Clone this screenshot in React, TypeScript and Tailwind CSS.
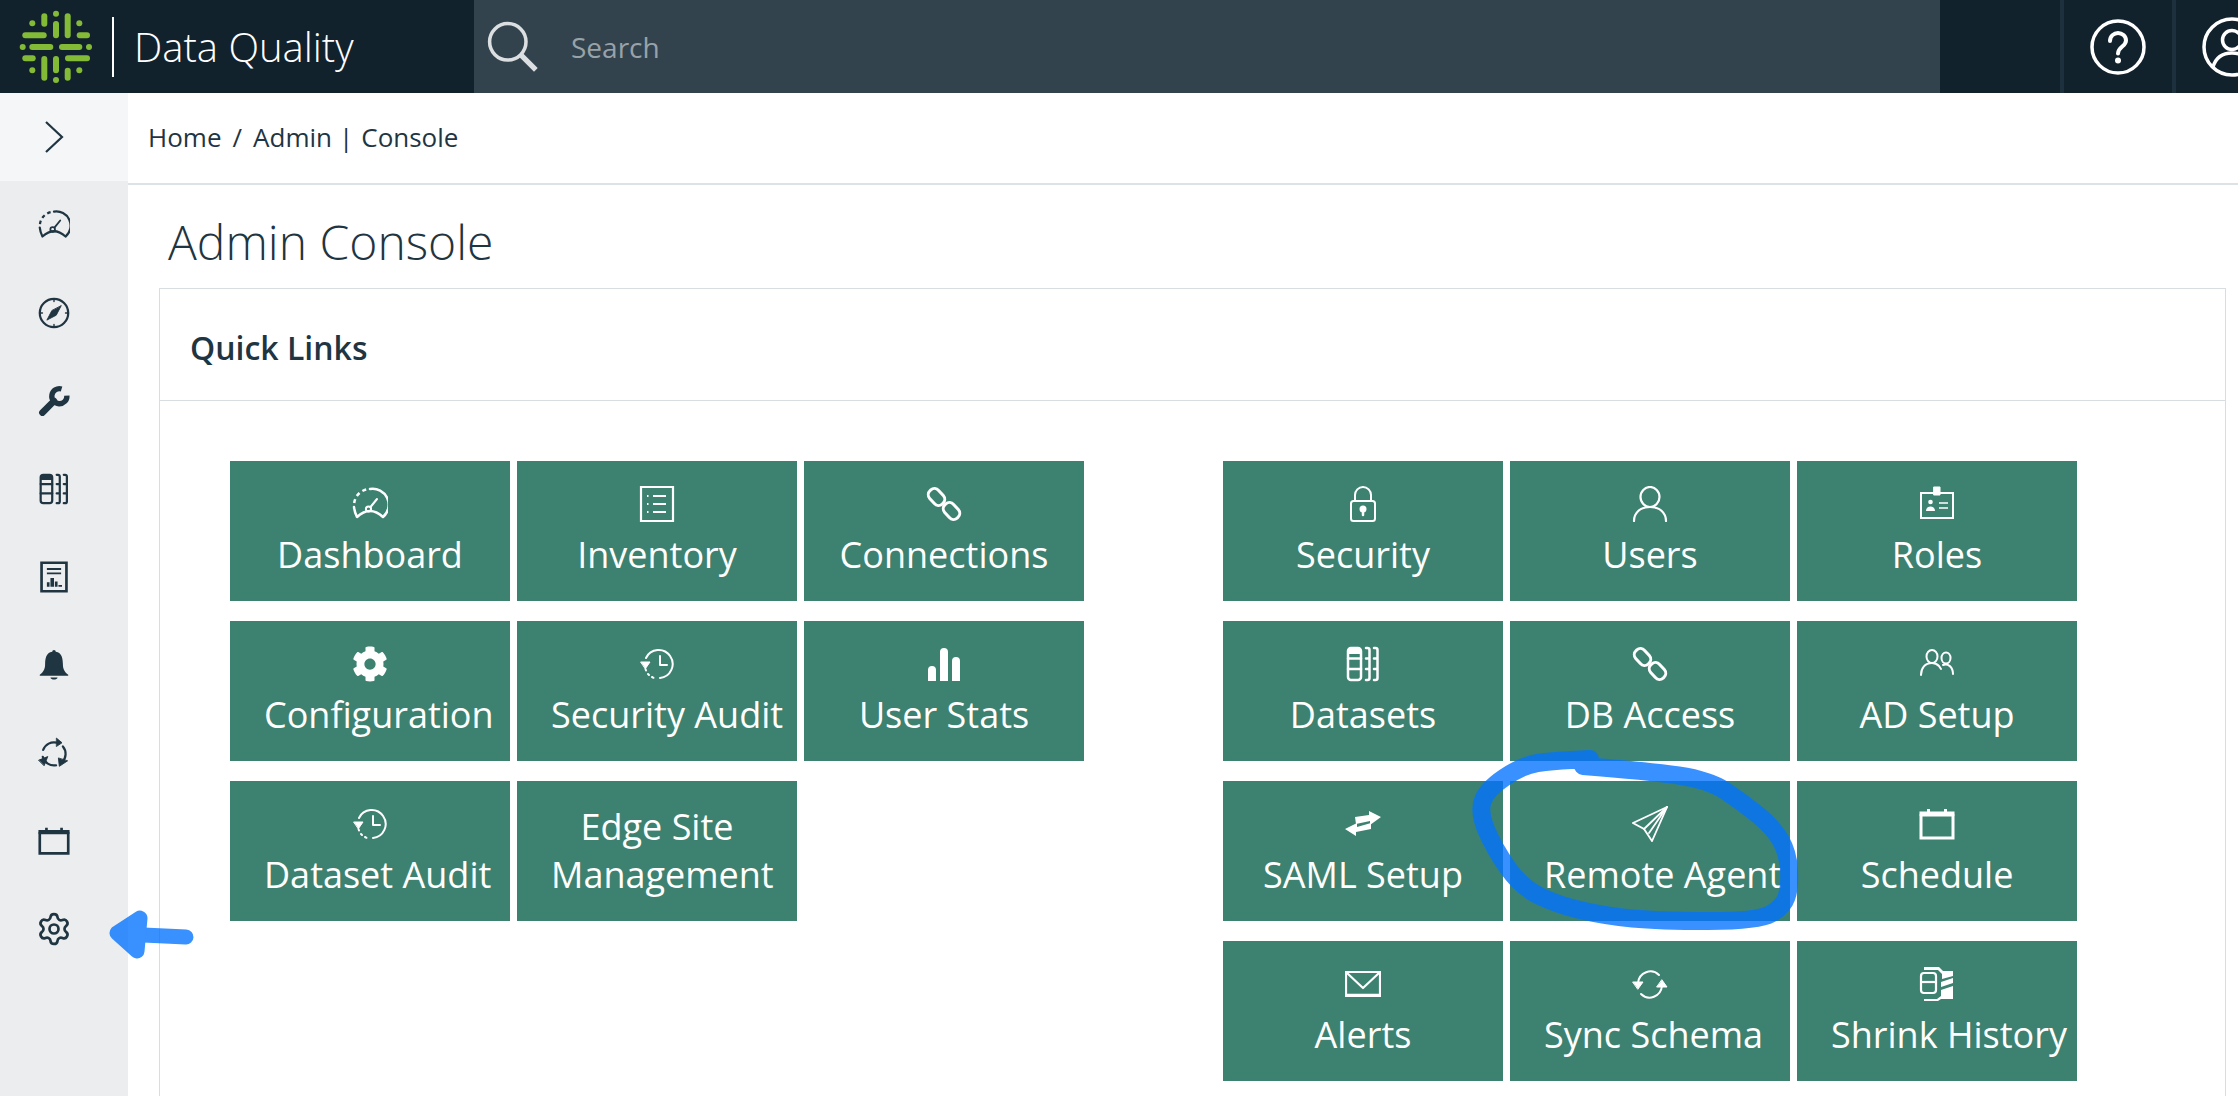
import React from 'react';
import { Settings } from 'lucide-react';
import { FaCog } from 'react-icons/fa';

type IconProps = { className?: string };

function Svg({ className, sw = 2.5, children }: IconProps & { sw?: number; children: React.ReactNode }) {
  return (
    <svg viewBox="0 0 36 36" className={className} fill="none" stroke="currentColor" strokeWidth={sw} strokeLinecap="round" strokeLinejoin="round">
      {children}
    </svg>
  );
}

const Gauge = ({ className }: IconProps) => (
  <Svg className={className}>
    <path d="M2.200 17 A16 16 0 0 1 16 3.200" strokeDasharray="4 3.500" strokeLinecap="butt" />
    <path d="M18 3 A16 16 0 0 1 31 31 Q18 19 5 31 Q2.500 26 2 21" />
    <circle cx="16.500" cy="23" r="2.600" strokeWidth="2" />
    <path d="M18.500 21 L25 13" strokeWidth="2" />
  </Svg>
);

const CompassIcon = ({ className }: IconProps) => (
  <Svg className={className}>
    <circle cx="18" cy="18" r="16" />
    <path d="M18 2v3M18 31v3M2 18h3M31 18h3" strokeWidth="1.600" />
    <path d="M26 10 L20.500 20.500 L10 26 L15.500 15.500Z" fill="currentColor" strokeWidth="1" />
  </Svg>
);

const WrenchIcon = ({ className }: IconProps) => (
  <Svg className={className} sw={6}>
    <path d="M5 31 L18 18" strokeWidth="7.500" />
    <path d="M26.500 4.500 A8.500 8.500 0 1 0 32.500 12" strokeWidth="6" strokeLinecap="butt" />
  </Svg>
);

const Datasets = ({ className }: IconProps) => (
  <Svg className={className}>
    <rect x="3" y="2" width="13" height="32" rx="3" />
    <path d="M3 12.500h13M3 23h13" />
    <path d="M3 8V5q0-3 3-3h7q3 0 3 3v3z" fill="currentColor" stroke="none" />
    <path d="M21 2h1.500q2 0 2 2v28q0 2-2 2H21M21 12.500h3.500M21 23h3.500" />
    <path d="M29 2h1.500q2 0 2 2v28q0 2-2 2H29M29 12.500h3.500M29 23h3.500" />
  </Svg>
);

const Report = ({ className }: IconProps) => (
  <Svg className={className} sw={3}>
    <path d="M4 2h28v32H4z" strokeLinejoin="miter" />
    <path d="M10 9h16M10 14h16" strokeWidth="2" strokeLinecap="butt" />
    <path d="M10 24h3v5h-3zM14 19h4v10h-4zM19 23h3v6h-3zM23 27h4v2h-4z" fill="currentColor" stroke="none" />
  </Svg>
);

const Bell = ({ className }: IconProps) => (
  <svg viewBox="0 0 36 36" className={className} fill="currentColor">
    <path d="M18 1a2 2 0 0 1 2 2C27 4 28 11 28 17c0 6 2 9 6 12v1H2v-1c4-3 6-6 6-12C8 11 9 4 16 3a2 2 0 0 1 2-2Z" />
    <path d="M14 32h8c-.5 3-7.500 3-8 0Z" />
  </svg>
);

const Cycle = ({ className }: IconProps) => (
  <Svg className={className}>
    <path d="M5.800 14.600 A13 13 0 0 1 21.400 6.400" />
    <path d="M28 10.600 A13 13 0 0 1 27.200 28.200" />
    <path d="M20.300 31.800 A13 13 0 0 1 5.400 22.400" />
    <path d="M21 1.500 L27 6.500 L21 10.500Z" fill="currentColor" strokeWidth="1" />
    <path d="M33 27 L24 33 L23 24Z" fill="currentColor" strokeWidth="1" />
    <path d="M1 26 L11 22 L7 32Z" fill="currentColor" strokeWidth="1" />
  </Svg>
);

const Calendar = ({ className }: IconProps) => (
  <Svg className={className} sw={3}>
    <path d="M2 7h32v25H2z" strokeLinejoin="miter" />
    <path d="M2 9h32" strokeWidth="3" />
    <path d="M9.500 3v4M26.500 3v4" strokeLinecap="butt" />
  </Svg>
);

const ListIcon = ({ className }: IconProps) => (
  <Svg className={className} sw={2.200}>
    <path d="M2 1h32v34H2z" strokeLinejoin="miter" />
    <path d="M14 10h13M14 18h13M14 26h13" strokeLinecap="butt" />
    <path d="M8 10h1.500M8 18h1.500M8 26h1.500" strokeLinecap="butt" />
  </Svg>
);

const LinkIcon = ({ className }: IconProps) => (
  <Svg className={className} sw={3}>
    <rect x="1.500" y="5" width="18" height="12" rx="5.500" transform="rotate(48 10.500 11)" />
    <rect x="16.500" y="19" width="18" height="12" rx="5.500" transform="rotate(48 25.500 25)" />
  </Svg>
);

const History = ({ className }: IconProps) => (
  <Svg className={className} sw={2}>
    <path d="M7 12 A14 14 0 1 1 21 32" />
    <path d="M9 28 L10 29M13 31 L14.500 31.800M6.500 23 L7 24.500" />
    <path d="M21 10v9h7" />
    <path d="M2 16h9l-4.500 6.500Z" fill="currentColor" strokeWidth="1" />
  </Svg>
);

const Bars = ({ className }: IconProps) => (
  <svg viewBox="0 0 36 36" className={className} fill="currentColor">
    <path d="M2 35V24q0-4 4-4t4 4v11zM14 35V6q0-4 4-4t4 4v29zM26 35V15q0-4 4-4t4 4v20z" />
  </svg>
);

const Lock = ({ className }: IconProps) => (
  <Svg className={className} sw={2}>
    <rect x="6" y="15" width="24" height="20" rx="2.500" />
    <path d="M10 15V9a8 8 0 0 1 16 0v6" />
    <circle cx="18" cy="23" r="2.500" fill="currentColor" />
    <path d="M18 24v5" strokeWidth="2.500" />
  </Svg>
);

const UserIcon = ({ className }: IconProps) => (
  <Svg className={className} sw={2.200}>
    <ellipse cx="18" cy="11" rx="9.500" ry="10" />
    <path d="M2 35C2 27 8 21 18 21s16 6 16 14" />
  </Svg>
);

const Badge = ({ className }: IconProps) => (
  <Svg className={className} sw={2}>
    <path d="M2 7h32v25H2z" strokeLinejoin="miter" />
    <rect x="15" y="1" width="6" height="8" fill="currentColor" strokeWidth="1" />
    <circle cx="11.500" cy="16" r="2.300" fill="currentColor" stroke="none" />
    <path d="M7 25c0-6 9-6 9 0z" fill="currentColor" stroke="none" />
    <path d="M20 17h9M20 22h9" strokeWidth="1.500" strokeLinecap="butt" />
  </Svg>
);

const Pair = ({ className }: IconProps) => (
  <Svg className={className} sw={2}>
    <ellipse cx="13" cy="10.500" rx="5.500" ry="6.500" />
    <path d="M2 29c0-7 4-12 11-12 3 0 5 1 7 3l2 3" />
    <ellipse cx="27" cy="12" rx="4.500" ry="5.500" />
    <path d="M24 19c5-2 10 2 10 9" />
  </Svg>
);

const Swap = ({ className }: IconProps) => (
  <svg viewBox="0 0 36 36" className={className} fill="currentColor">
    <path d="M10 11 L24 9 V5 L36 11 L25 19 V15 L11 18Z" />
    <path d="M26 17 L12 21 V17 L0 23 L11 30 V26 L26 23Z" />
  </svg>
);

const Plane = ({ className }: IconProps) => (
  <Svg className={className} sw={1.800}>
    <path d="M35 1 L1 17 L12 23 L20 35Z" strokeLinejoin="miter" />
    <path d="M35 1 L12 23M35 1 L17 27" />
  </Svg>
);

const MailIcon = ({ className }: IconProps) => (
  <Svg className={className} sw={2.200}>
    <path d="M1 6h34v24H1z" strokeLinejoin="miter" />
    <path d="M2 7 L18 22 L34 7" />
    <path d="M1 29h34" strokeWidth="2.500" />
  </Svg>
);

const SyncIcon = ({ className }: IconProps) => (
  <Svg className={className} sw={2}>
    <path d="M6 17 A12.500 13 0 0 1 27 9" />
    <path d="M30 20 A12.500 13 0 0 1 9 28" />
    <path d="M1 16h10l-5 7Z" fill="currentColor" strokeWidth="1" />
    <path d="M25 21h10l-5-7Z" fill="currentColor" strokeWidth="1" />
  </Svg>
);

const Shrink = ({ className }: IconProps) => (
  <svg viewBox="0 0 36 36" className={className}>
    <rect x="2" y="7" width="15" height="20" rx="3" fill="none" stroke="currentColor" strokeWidth="2.200" />
    <path d="M2 16h15" stroke="currentColor" strokeWidth="2.200" />
    <path d="M5 1h15l4 4h10v5l-11 3V8l-4-4H5zM22 16l12-4v5l-12 4zM22 24l12-4v13H22l-3 2H5v-2h13l4-3z" fill="currentColor" />
  </svg>
);

const Magnifier = ({ className }: IconProps) => (
  <svg viewBox="0 0 50 50" className={className} fill="none" stroke="currentColor">
    <circle cx="20" cy="20" r="17.500" strokeWidth="3.400" />
    <path d="M33 33 L47 47" strokeWidth="5" />
  </svg>
);

function Logo() {
  const lines = [
    'M44.300 16.300V23.700', 'M56 24V35.300', 'M67.700 16.300V35.300',
    'M44.300 59V77.700', 'M56 59V70.300', 'M67.700 70.700V77.700',
    'M25.300 35.300H43.700', 'M79.700 35.300H87', 'M32.300 47H50.300', 'M62 47H79.300',
    'M25.300 58.300H32.700', 'M68 58.300H87',
  ];
  const dots = [[56, 13.700], [32.300, 23.300], [79.300, 23.300], [22.700, 47], [89, 47], [32.300, 70.300], [79.300, 70.300], [56, 80]];
  return (
    <svg viewBox="18 9 76 76" className="h-[76px] w-[76px] shrink-0 text-[#84bb36]" fill="currentColor" stroke="currentColor" strokeLinecap="round">
      {lines.map((d) => <path key={d} d={d} strokeWidth="6" fill="none" />)}
      {dots.map(([cx, cy]) => <circle key={`${cx}-${cy}`} cx={cx} cy={cy} r="3" strokeWidth="0" />)}
    </svg>
  );
}

const sideIcons = [Gauge, CompassIcon, WrenchIcon, Datasets, Report, Bell, Cycle, Calendar];

type Tile = { label: React.ReactNode; icon?: React.ComponentType<IconProps> };

const leftTiles: Tile[] = [
  { label: 'Dashboard', icon: Gauge },
  { label: 'Inventory', icon: ListIcon },
  { label: 'Connections', icon: LinkIcon },
  { label: 'Configuration', icon: FaCog },
  { label: 'Security Audit', icon: History },
  { label: 'User Stats', icon: Bars },
  { label: 'Dataset Audit', icon: History },
  { label: <>Edge Site<br />Management</> },
];

const rightTiles: Tile[] = [
  { label: 'Security', icon: Lock },
  { label: 'Users', icon: UserIcon },
  { label: 'Roles', icon: Badge },
  { label: 'Datasets', icon: Datasets },
  { label: 'DB Access', icon: LinkIcon },
  { label: 'AD Setup', icon: Pair },
  { label: 'SAML Setup', icon: Swap },
  { label: 'Remote Agent', icon: Plane },
  { label: 'Schedule', icon: Calendar },
  { label: 'Alerts', icon: MailIcon },
  { label: 'Sync Schema', icon: SyncIcon },
  { label: 'Shrink History', icon: Shrink },
];

function TileButton({ tile }: { tile: Tile }) {
  const Icon = tile.icon;
  return (
    <a href="#" className={Icon
      ? 'block h-[140px] bg-[#3d8270] px-[34px] pt-[25px] text-center whitespace-nowrap text-[36px] leading-[48px] text-white'
      : 'flex h-[140px] flex-col justify-center bg-[#3d8270] px-[34px] text-center whitespace-nowrap text-[36px] leading-[48px] text-white'}>
      {Icon && <Icon className="mx-auto mb-[9px] block h-9 w-9" />}
      <span className="block">{tile.label}</span>
    </a>
  );
}

function TileGrid({ tiles }: { tiles: Tile[] }) {
  return (
    <div className="grid w-[854px] grid-cols-[repeat(3,280px)] content-start gap-x-[7px] gap-y-5">
      {tiles.map((t, i) => <TileButton key={i} tile={t} />)}
    </div>
  );
}

// midpoint smoothing for the hand drawn marker stroke
function smooth(pts: number[][]) {
  let d = `M${pts[0][0]} ${pts[0][1]}`;
  for (let i = 1; i < pts.length - 1; i++) {
    const mx = (pts[i][0] + pts[i + 1][0]) / 2;
    const my = (pts[i][1] + pts[i + 1][1]) / 2;
    d += ` Q${pts[i][0]} ${pts[i][1]} ${mx} ${my}`;
  }
  const last = pts[pts.length - 1];
  return `${d} L${last[0]} ${last[1]}`;
}

const loop = [
  [1583, 766], [1648, 771], [1709, 780], [1742, 802], [1773, 827], [1788, 853], [1790, 887], [1783, 907], [1758, 921],
  [1659, 921], [1606, 916], [1558, 905], [1521, 887], [1494, 848], [1479, 813], [1486, 790], [1523, 765], [1552, 761], [1590, 759],
];

function Marker() {
  return (
    <svg viewBox="0 0 2238 1096" className="pointer-events-none absolute inset-0 h-[1096px] w-[2238px]" fill="none" stroke="#0374ff" strokeLinecap="round" strokeLinejoin="round">
      <g opacity="0.79">
        <path d={smooth(loop)} strokeWidth="18" />
      </g>
      <g opacity="0.79">
        <path d="M186 937 L122 934" strokeWidth="15" />
        <path d="M117 933 L140 918 L137 951Z" strokeWidth="15" fill="#0374ff" />
      </g>
    </svg>
  );
}

export default function App() {
  return (
    <div className="relative h-[1096px] w-[2238px] overflow-hidden bg-white font-['Open_Sans',sans-serif] text-[#1f3542]">
      <header className="flex h-[93px] bg-[#12222d] text-white">
        <div className="flex w-[474px] shrink-0 items-center pl-[18px]">
          <Logo />
          <div className="ml-[18px] h-[60px] w-[2px] bg-white" />
          <span className="ml-[20px] text-[40px] font-light">Data Quality</span>
        </div>
        <div className="flex w-[1466px] items-center bg-[#33434e]">
          <Magnifier className="ml-[13px] h-[52px] w-[52px] text-[#dcdfe1]" />
          <span className="ml-[32px] text-[28px] text-[#98a2a8]">Search</span>
        </div>
        <div className="w-[120px]" />
        <div className="flex w-[112px] items-center justify-center border-l-4 border-[#1c303d]">
          <svg viewBox="0 0 56 56" className="h-14 w-14" fill="none" stroke="currentColor" strokeWidth="3.500" strokeLinecap="round">
            <circle cx="28" cy="28" r="26" />
            <path d="M20 22c0-5 4-8 8-8s8 3 8 7.500c0 6-8 6-8 13" strokeWidth="4" />
            <circle cx="28" cy="41.500" r="3" fill="currentColor" stroke="none" />
          </svg>
        </div>
        <div className="flex flex-1 items-center overflow-hidden border-l-4 border-[#1c303d] pl-[26px]">
          <svg viewBox="0 0 60 60" className="h-[60px] w-[60px] shrink-0" fill="none" stroke="currentColor" strokeWidth="3.500">
            <circle cx="30" cy="30" r="28" />
            <circle cx="30" cy="23" r="9.500" />
            <path d="M11 50c3-10 10-14 19-14s16 4 19 14" />
          </svg>
        </div>
      </header>

      <div className="flex h-[1003px]">
        <aside className="w-32 shrink-0 bg-[#ecedef] text-[#1f3542]">
          <div className="flex h-[88px] items-center justify-center bg-[#f5f6f8] pr-5">
            <svg viewBox="0 0 20 32" className="h-8 w-5" fill="none" stroke="currentColor" strokeWidth="2.200">
              <path d="M2 1 L18 16 L2 31" />
            </svg>
          </div>
          {sideIcons.map((Icon, i) => (
            <div key={i} className="flex h-[88px] items-center justify-center pr-5">
              <Icon className="h-8 w-8" />
            </div>
          ))}
          <div className="flex h-[88px] items-center justify-center pr-5">
            <Settings className="h-9 w-9" strokeWidth={1.800} />
          </div>
        </aside>

        <main className="min-w-0 flex-1">
          <div className="flex h-[92px] items-center gap-[11px] border-b-2 border-[#dde2e6] pb-[1px] pl-5 text-[26px]">
            <span>Home</span>
            <span>/</span>
            <span>Admin</span>
            <span className="-ml-[4px] -mr-[3px]">|</span>
            <span>Console</span>
          </div>
          <h1 className="ml-10 mt-[26px] text-[48px] leading-[62px] font-light">Admin Console</h1>
          <section className="ml-[31px] mr-3 mt-[15px] border border-[#d8dde1] pb-[60px]">
            <div className="flex h-[112px] items-center border-b border-[#d8dde1] pl-[30px] pt-[6px] text-[32px] font-semibold">Quick Links</div>
            <div className="flex gap-[139px] pl-[70px] pt-[60px]">
              <TileGrid tiles={leftTiles} />
              <TileGrid tiles={rightTiles} />
            </div>
          </section>
        </main>
      </div>

      <Marker />
    </div>
  );
}
